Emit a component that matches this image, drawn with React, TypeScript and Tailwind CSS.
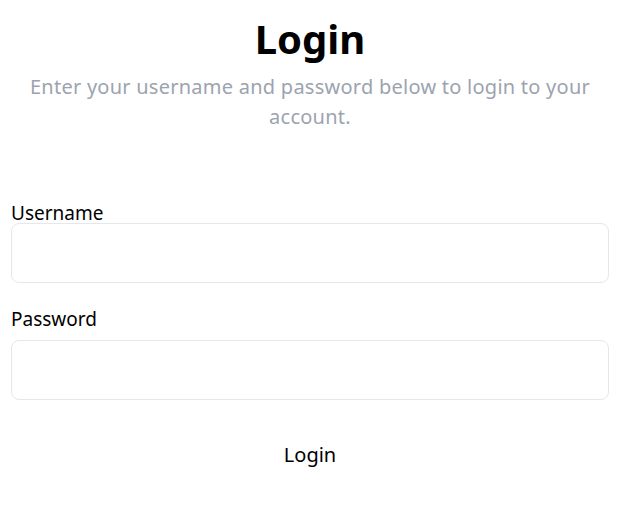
export default function App() {
  return (
    <div className="min-h-screen bg-white font-['Noto_Sans','Noto_Sans_CJK_KR',sans-serif] text-black">
      <div className="flex flex-col pl-[11px] pr-[13px] pt-[14px]">
        <h1 className="text-center text-[40px] font-bold leading-[50px]">Login</h1>
        <p className="mx-auto mt-[8px] max-w-[580px] text-center text-[20px] leading-[30px] tracking-[0.25px] text-[#9ca3af]">
          Enter your username and password below to login to your account.
        </p>

        <form className="mt-[71px] flex flex-col">
          <label htmlFor="username" className="text-[19px] leading-[20px]">
            Username
          </label>
          <input
            id="username"
            type="text"
            className="h-[60px] w-full rounded-lg border border-[#e5e7eb] px-3 outline-none"
          />

          <label htmlFor="password" className="mt-[24px] text-[19px] leading-[24px]">
            Password
          </label>
          <input
            id="password"
            type="password"
            className="mt-[9px] h-[60px] w-full rounded-lg border border-[#e5e7eb] px-3 outline-none"
          />

          <button type="button" className="mt-[40px] self-center text-[20px] leading-[30px]">
            Login
          </button>
        </form>
      </div>
    </div>
  );
}
